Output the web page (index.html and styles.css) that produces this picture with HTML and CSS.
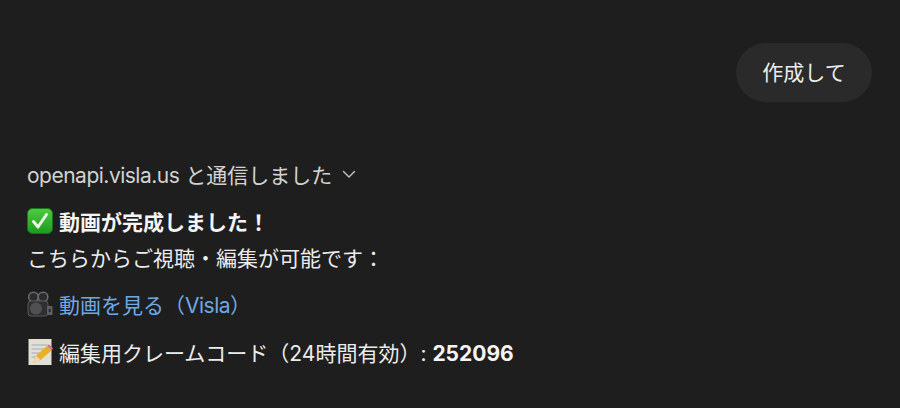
FILE: index.html
```html
<!DOCTYPE html>
<html lang="ja">
<head>
<meta charset="utf-8">
<title>Chat</title>
<link rel="stylesheet" href="styles.css">
</head>
<body>
<main class="chat">
  <div class="user-row"><div class="bubble">作成して</div></div>
  <div class="reply">
    <div class="tool"><span><span class="latin">openapi.visla.us</span> と通信しました</span>
      <svg class="chev" viewBox="0 0 14 14" width="14" height="14"><path d="M1.5 4.5 7 10l5.5-5.5" fill="none" stroke="#c4c4c4" stroke-width="1.4" stroke-linecap="round" stroke-linejoin="round"/></svg>
    </div>
    <div class="block">
      <p class="line title"><svg class="emoji" viewBox="0 0 26 26" width="26" height="26"><defs><linearGradient id="check-bg" x1="0" y1="0" x2="0" y2="1"><stop offset="0" stop-color="#4ecb3f"/><stop offset="1" stop-color="#1c9a1f"/></linearGradient></defs><rect x="0.5" y="0.5" width="25" height="25" rx="5" fill="url(#check-bg)" stroke="#17761a"/><path d="M6.5 13.5 11 19 19.5 6.5" fill="none" stroke="#e6f8e0" stroke-width="3" stroke-linecap="round" stroke-linejoin="round"/></svg><strong>動画が完成しました！</strong></p>
      <p class="line sub">こちらからご視聴・編集が可能です：</p>
    </div>
    <p class="line link-line"><svg class="emoji" viewBox="0 0 26 26" width="26" height="26"><circle cx="6.5" cy="6" r="4.8" fill="#2c2c2e" stroke="#6a6a6d" stroke-width="1.6"/><circle cx="16" cy="6" r="4.8" fill="#2c2c2e" stroke="#6a6a6d" stroke-width="1.6"/><rect x="1" y="10" width="20" height="15" rx="3" fill="#2f2f31" stroke="#58585b"/><circle cx="9" cy="17.5" r="6" fill="#505054"/><path d="M20 15h5.5v9H20z" fill="#5e5e61"/><path d="M21.5 18h2.5v3h-2.500z" fill="#333335"/></svg><a class="link" href="#">動画を見る（<span class="latin">Visla</span>）</a></p>
    <p class="line code-line"><svg class="emoji" viewBox="0 0 26 26" width="26" height="26"><rect x="1.500" y="0" width="23" height="26" fill="#e2dfd6"/><path d="M4.500 6h16M4.500 10h13M4.500 14h9M4.500 18h6" stroke="#b9bcc2" stroke-width="1.300"/><path d="M6 24 9 16.500 20 7l4.500 4.500-11 9.500z" fill="#e8b126"/><path d="M20 7l2-1.800 4 4-1.500 2.300z" fill="#c9758a"/><path d="M6 24l3-7.500 4.500 4.500z" fill="#f0d9a8"/></svg><span>編集用クレームコード（24時間有効）: <strong>252096</strong></span></p>
  </div>
</main>
</body>
</html>
```
FILE: styles.css
```css
* { box-sizing: border-box; }
html, body { margin: 0; height: 100%; }
body {
  background: #1e1e1e;
  color: #ececec;
  font-family: Inter, "Noto Sans CJK JP", sans-serif;
  font-size: 21px;
  overflow: hidden;
}
.chat { padding: 43px 28px 0 27px; }
.user-row { display: flex; justify-content: flex-end; }
.bubble {
  width: 136px;
  height: 59px;
  padding-bottom: 3px;
  border-radius: 30px;
  background: #2a2a2a;
  display: flex;
  align-items: center;
  justify-content: center;
}
.reply { margin-top: 57px; }
.tool {
  display: flex;
  align-items: center;
  gap: 10px;
  height: 30px;
  color: #d2d2d2;
}
.latin { letter-spacing: -0.5px; }
.block { margin-top: 15px; }
.line {
  margin: 0;
  display: flex;
  align-items: center;
  height: 34px;
  white-space: pre;
}
.sub { margin-top: 2px; }
.emoji { flex: none; margin-right: 6px; }
.link-line { margin-top: 13px; }
.code-line { margin-top: 14px; }
.link { color: #6ea8e6; text-decoration: none; }
strong { font-weight: 700; color: #f5f5f5; }
.chev { flex: none; }
```
